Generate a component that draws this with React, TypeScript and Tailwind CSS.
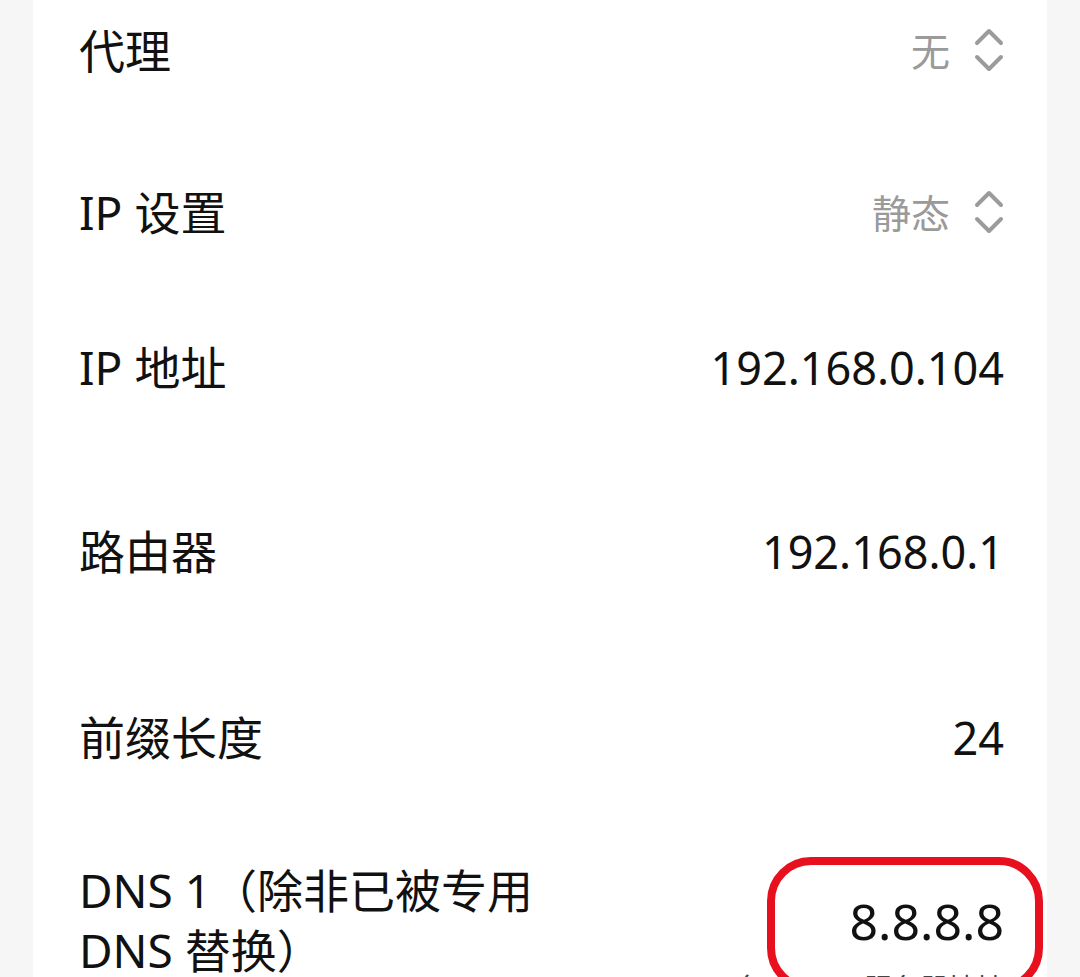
import React from "react";

const font = { fontFamily: '"Noto Sans", "Noto Sans CJK SC", sans-serif' };

const Chevrons = () => (
  <svg width="30" height="46" viewBox="0 0 30 46" fill="none" stroke="#9b9b9b" strokeWidth="4" strokeLinecap="round" strokeLinejoin="round">
    <path d="M3 16 L15 4 L27 16" />
    <path d="M3 30 L15 42 L27 30" />
  </svg>
);

interface RowProps {
  label: React.ReactNode;
  value: string;
  select?: boolean;
  className?: string;
}

const Row: React.FC<RowProps> = ({ label, value, select, className }) => (
  <div className={"flex h-[100px] items-center justify-between " + (className ?? "")}>
    <span className="text-[46px] leading-none text-[#111]">{label}</span>
    {select ? (
      <div className="flex items-center gap-[24px]">
        <span className="text-[39px] leading-none text-[#9a9a9a]">{value}</span>
        <Chevrons />
      </div>
    ) : (
      <span className="text-[45px] leading-none text-[#111]">{value}</span>
    )}
  </div>
);

export default function App() {
  return (
    <div className="relative h-[977px] w-[1080px] overflow-hidden bg-[#f6f6f6] px-[33px]" style={font}>
      <div className="h-full bg-white pl-[46px] pr-[43px]">
        <Row label="代理" value="无" select />
        <Row label="IP 设置" value="静态" select className="mt-[62px]" />
        <Row label="IP 地址" value="192.168.0.104" className="mt-[55px]" />
        <Row label="路由器" value="192.168.0.1" className="mt-[84px]" />
        <Row label="前缀长度" value="24" className="mt-[86px]" />
        <div className="mt-[73px] flex justify-between">
          <div className="text-[46px] leading-[60px] text-[#111]">
            <div>DNS 1（除非已被专用</div>
            <div>DNS 替换）</div>
          </div>
          <div className="flex flex-col items-end pt-[36px]">
            <span className="text-[50px] leading-none text-[#111]">8.8.8.8</span>
            <span className="mt-[28px] text-[28px] leading-none text-[#444]">备用 DNS 服务器地址</span>
          </div>
        </div>
      </div>
      <div className="absolute left-[767px] top-[857px] h-[135px] w-[276px] rounded-[44px] border-[8px] border-[#e8101e]" />
    </div>
  );
}
